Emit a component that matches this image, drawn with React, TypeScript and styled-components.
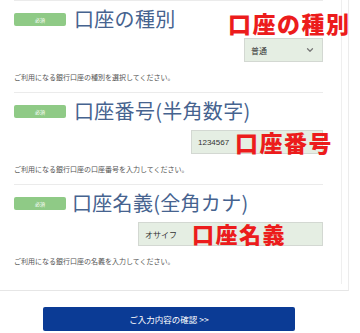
import React from "react";
import styled, { createGlobalStyle } from "styled-components";
import { ChevronDown } from "lucide-react";

const Global = createGlobalStyle`
  html, body { margin: 0; padding: 0; background: #fff; }
  body { font-family: "Noto Sans CJK JP", "Noto Sans", sans-serif; }
`;

const Page = styled.div`
  width: 360px;
  height: 333px;
  overflow: hidden;
  background: #fff;
`;

const Outer = styled.div`
  width: 349px;
  box-sizing: border-box;
  border-right: 1px solid #ececec;
  border-bottom: 1px solid #e6e6e6;
  padding-bottom: 6px;
`;

const Inner = styled.div`
  width: 342px;
  box-sizing: border-box;
  border-right: 1px solid #efefef;
  padding: 0 18px 18px 14px;
`;

const Section = styled.section<{ $last?: boolean }>`
  position: relative;
  border-top: 1px solid #ebebeb;
  padding: 8px 0 ${(p) => (p.$last ? "0" : "10px")};
`;

const Header = styled.div`
  display: flex;
  align-items: center;
  gap: 8px;
  height: 20px;
`;

const Badge = styled.span`
  display: flex;
  align-items: center;
  justify-content: center;
  width: 52px;
  height: 13px;
  border-radius: 2px;
  background: #8fca86;
  color: #fff;
  font-size: 5px;
  line-height: 1;
`;

const Title = styled.h2<{ $shift?: number }>`
  margin: 0 0 0 ${(p) => p.$shift ?? 0}px;
  font-size: 20px;
  line-height: 20px;
  font-weight: 400;
  color: #46638f;
  letter-spacing: 0.3px;
  white-space: nowrap;
`;

const FieldRow = styled.div`
  display: flex;
  justify-content: flex-end;
  margin-top: 9px;
`;

const Field = styled.div<{ $width: number }>`
  display: flex;
  align-items: center;
  justify-content: space-between;
  box-sizing: border-box;
  width: ${(p) => p.$width}px;
  height: 24px;
  padding: 0 7px 0 6px;
  background: #e5eee3;
  border: 1px solid #d3d8d2;
  font-size: 8px;
  color: #333;
  font-family: "Liberation Sans", "Noto Sans CJK JP", sans-serif;
`;

const Help = styled.p`
  margin: 10px 0 0;
  font-size: 7px;
  line-height: 10px;
  color: #555;
  white-space: nowrap;
`;

const Note = styled.span<{ $left: number; $top: number; $size: number }>`
  position: absolute;
  left: ${(p) => p.$left}px;
  top: ${(p) => p.$top}px;
  font-size: ${(p) => p.$size}px;
  line-height: ${(p) => p.$size}px;
  font-weight: 900;
  color: #ec1c1c;
  letter-spacing: 1.5px;
  white-space: nowrap;
`;

const ButtonRow = styled.div`
  display: flex;
  padding: 16px 0 0 43px;
`;

const SubmitButton = styled.button`
  width: 252px;
  height: 24px;
  border: none;
  border-radius: 2px;
  background: #0b3b95;
  color: #fff;
  font-size: 8.5px;
  font-family: "Noto Sans CJK JP", sans-serif;
  cursor: pointer;
`;

export default function App() {
  return (
    <Page>
      <Global />
      <Outer>
        <Inner>
          <Section>
            <Header>
              <Badge>必須</Badge>
              <Title>口座の種別</Title>
            </Header>
            <FieldRow>
              <Field $width={79}>
                <span>普通</span>
                <ChevronDown size={10} color="#777" strokeWidth={3} />
              </Field>
            </FieldRow>
            <Help>ご利用になる銀行口座の種別を選択してください。</Help>
            <Note $left={214} $top={11} $size={23}>口座の種別</Note>
          </Section>
          <Section>
            <Header>
              <Badge>必須</Badge>
              <Title>口座番号(半角数字)</Title>
            </Header>
            <FieldRow>
              <Field $width={132}>
                <span>1234567</span>
              </Field>
            </FieldRow>
            <Help>ご利用になる銀行口座の口座番号を入力してください。</Help>
            <Note $left={221} $top={38} $size={23}>口座番号</Note>
          </Section>
          <Section $last>
            <Header>
              <Badge>必須</Badge>
              <Title $shift={-2}>口座名義(全角カナ)</Title>
            </Header>
            <FieldRow>
              <Field $width={185}>
                <span>オサイフ</span>
              </Field>
            </FieldRow>
            <Help>ご利用になる銀行口座の名義を入力してください。</Help>
            <Note $left={178} $top={37} $size={22}>口座名義</Note>
          </Section>
        </Inner>
      </Outer>
      <ButtonRow>
        <SubmitButton>ご入力内容の確認 &gt;&gt;</SubmitButton>
      </ButtonRow>
    </Page>
  );
}
